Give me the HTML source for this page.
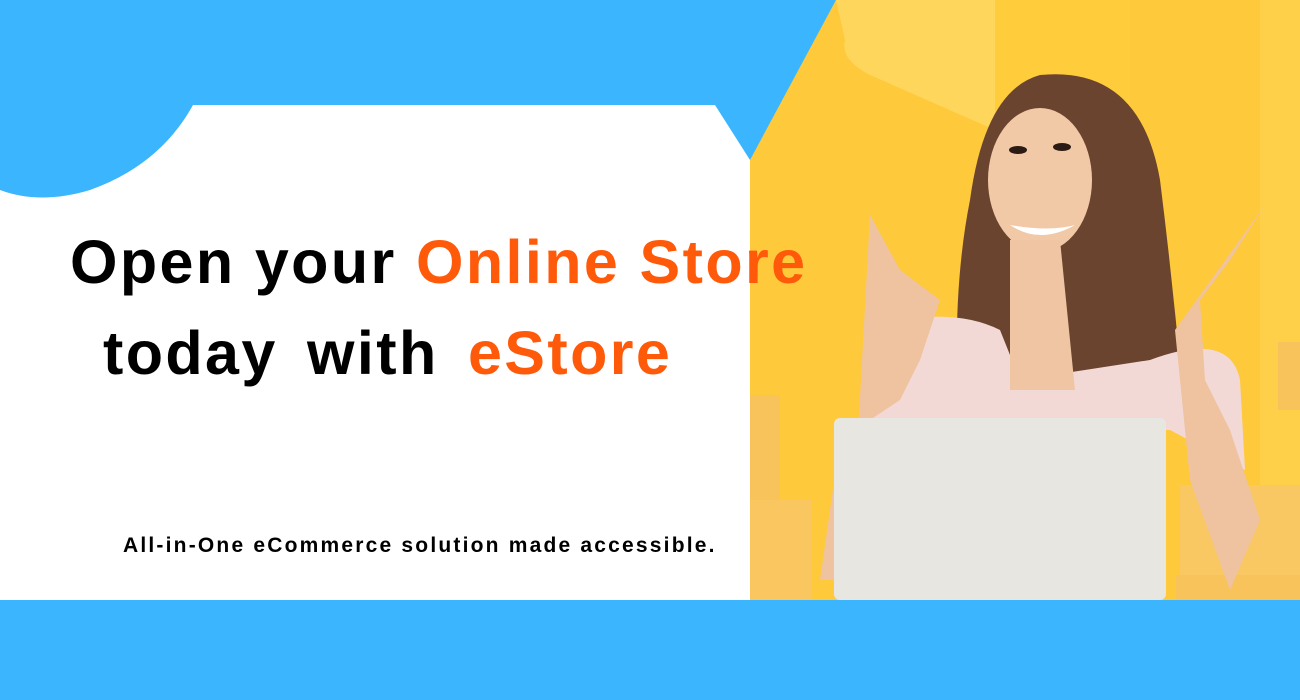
<!DOCTYPE html>
<html><head><style>
html,body{margin:0;padding:0}
body{width:1300px;height:700px;position:relative;overflow:hidden;background:#3bb5fe;font-family:"Liberation Sans",sans-serif}
svg{position:absolute;left:0;top:0}
.t{position:absolute;font-weight:bold;white-space:nowrap;color:#000}
.o{color:#ff5a0a}
</style></head><body>
<svg width="1300" height="700" viewBox="0 0 1300 700">
<path d="M0 190 Q40 205 90 190 Q160 165 193 105 L715 105 L750 160 L750 600 L0 600 Z" fill="#fff"/>
<g>
<rect x="750" y="0" width="550" height="600" fill="#fec93a"/>
<path d="M836 0 L995 0 L995 130 L870 75 Q840 60 845 40 Z" fill="#fed65c"/>
<path d="M995 0 L1130 0 L1130 300 L995 280 Z" fill="#ffcd3c"/>
<rect x="1260" y="0" width="40" height="600" fill="#fed04a"/>
<path d="M750 160 L836 0 L750 0 Z" fill="#3bb5fe"/>
<!-- boxes -->
<rect x="750" y="395" width="30" height="105" fill="#f7c35a"/>
<rect x="750" y="500" width="62" height="100" fill="#f9c660"/>
<rect x="1278" y="342" width="22" height="68" fill="#f7c35a"/>
<rect x="1180" y="485" width="120" height="90" fill="#f9c862"/>
<rect x="1176" y="575" width="124" height="25" fill="#f7c35a"/>
<!-- hair -->
<path d="M1040 75 Q1140 65 1160 180 Q1175 300 1185 420 L1090 440 L960 440 Q950 300 970 200 Q985 90 1040 75Z" fill="#6b4430"/>
<!-- body/shirt -->
<path d="M900 320 Q960 310 1000 330 L1020 380 L1150 360 Q1230 330 1240 380 L1245 470 L1170 430 L870 430 Z" fill="#f3d9d6"/>
<!-- face -->
<ellipse cx="1040" cy="180" rx="52" ry="72" fill="#f2c9a6"/>
<path d="M1010 225 Q1040 245 1075 225 Q1050 232 1010 225Z" fill="#fff"/>
<ellipse cx="1018" cy="150" rx="9" ry="4" fill="#2b1b14"/>
<ellipse cx="1062" cy="147" rx="9" ry="4" fill="#2b1b14"/>
<path d="M1010 240 L1060 240 L1075 390 L1010 390 Z" fill="#efc5a3"/>
<!-- arms -->
<path d="M870 215 L900 270 L940 300 L920 360 L900 400 L840 440 L820 580 L850 580 Z" fill="#efc3a0"/>
<path d="M1265 205 L1230 260 L1200 300 L1205 380 L1230 430 L1260 520 L1230 590 L1190 480 L1175 330 Z" fill="#efc3a0"/>
<rect x="834" y="418" width="332" height="182" rx="6" fill="#e8e6e1"/>
</g>
</svg>
<div class="t" style="left:70px;top:227px;font-size:61px;letter-spacing:2.4px">Open your <span class="o">Online Store</span></div>
<div class="t" style="left:103px;top:318px;font-size:61px;letter-spacing:2.4px;word-spacing:10px">today with <span class="o">eStore</span></div>
<div class="t" style="left:123px;top:534px;font-size:21px;letter-spacing:2.2px">All-in-One eCommerce solution made accessible.</div>
</body></html>
